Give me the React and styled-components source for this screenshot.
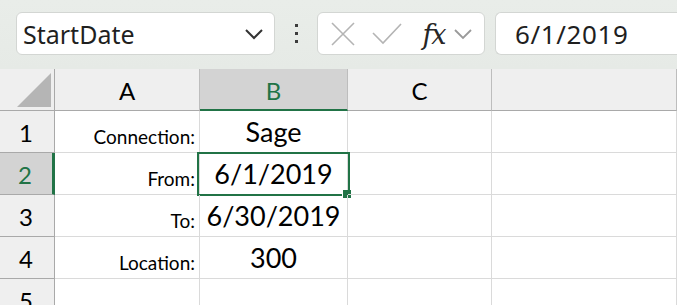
import React from 'react';
import styled, { createGlobalStyle } from 'styled-components';

const GlobalStyle = createGlobalStyle`
  html, body { margin: 0; padding: 0; background: #ffffff; overflow: hidden; }
  * { box-sizing: border-box; }
`;

const Page = styled.div`
  width: 677px;
  height: 305px;
  overflow: hidden;
  display: flex;
  flex-direction: column;
`;

const FormulaBar = styled.div`
  height: 69px;
  flex: none;
  display: flex;
  align-items: center;
  padding: 0 0 2px 16px;
  background: linear-gradient(#e9ede9, #e6eae6);
  font-family: "Noto Sans", "Open Sans", sans-serif;
`;

const Box = styled.div`
  height: 43px;
  background: #fff;
  border: 1px solid #d3d6d3;
  border-radius: 6px;
  display: flex;
  align-items: center;
`;

const NameBox = styled(Box)`
  width: 259px;
  padding: 0 10px 0 6px;
  justify-content: space-between;
  font-size: 25px;
  color: #1f1f1f;
`;

const Dots = styled.div`
  width: 42px;
  display: flex;
  flex-direction: column;
  align-items: center;
  gap: 5px;
  span {
    width: 3px;
    height: 3px;
    background: #3c3c3c;
  }
`;

const ButtonGroup = styled(Box)`
  width: 168px;
  padding: 0 4px 0 12px;
`;

const IconSlot = styled.div`
  width: ${p => p.$w}px;
  display: flex;
  align-items: center;
  justify-content: center;
`;

const Fx = styled.span`
  font-family: "DejaVu Serif", "Liberation Serif", serif;
  font-style: italic;
  font-size: 27px;
  line-height: 1;
  color: #262626;
  letter-spacing: -1px;
  padding-top: 2px;
`;

const Input = styled(Box)`
  flex: 1;
  margin-left: 10px;
  border-right: none;
  border-radius: 6px 0 0 6px;
  padding-left: 19px;
  font-size: 26px;
  letter-spacing: 0.6px;
  color: #1f1f1f;
`;

const Sheet = styled.div`
  flex: 1;
  display: grid;
  grid-template-columns: 55px 145px 148px 144px 1fr;
  grid-auto-rows: 42px;
  font-family: Lato, "Liberation Sans", sans-serif;
`;

const Cell = styled.div`
  border-right: 1px solid #dadada;
  border-bottom: 1px solid #dadada;
  display: flex;
  align-items: flex-end;
  justify-content: ${p => (p.$align === 'right' ? 'flex-end' : 'center')};
  padding: 0 4px 4px;
  font-size: ${p => p.$size || 25}px;
  color: #000;
  position: relative;
  white-space: nowrap;
`;

const Corner = styled.div`
  background: #efefef;
  border-right: 1px solid #a9a9a9;
  border-bottom: 1px solid #a9a9a9;
  position: relative;
  &::after {
    content: '';
    position: absolute;
    right: 3px;
    bottom: 3px;
    width: 34px;
    height: 34px;
    background: #b5b5b5;
    clip-path: polygon(100% 0, 100% 100%, 0 100%);
  }
`;

const ColHead = styled.div`
  background: ${p => (p.$active ? '#d3d3d3' : '#efefef')};
  border-right: 1px solid #bdbdbd;
  border-bottom: ${p => (p.$active ? '2px solid #217346' : '1px solid #a9a9a9')};
  display: flex;
  align-items: center;
  justify-content: center;
  padding-top: 2px;
  font-size: 24px;
  color: ${p => (p.$active ? '#217346' : '#000')};
`;

const RowHead = styled.div`
  background: ${p => (p.$active ? '#d3d3d3' : '#efefef')};
  border-right: ${p => (p.$active ? '3px solid #217346' : '1px solid #a9a9a9')};
  border-bottom: 1px solid #a9a9a9;
  display: flex;
  align-items: center;
  justify-content: center;
  padding: 2px 2px 0 0;
  font-size: 24px;
  color: ${p => (p.$active ? '#217346' : '#000')};
`;

const Selection = styled.div`
  position: absolute;
  top: -1px;
  left: -3px;
  right: -3px;
  bottom: -2px;
  border: 2px solid #217346;
  pointer-events: none;
  &::after {
    content: '';
    position: absolute;
    right: -3px;
    bottom: -4px;
    width: 8px;
    height: 8px;
    background: #217346;
    border-left: 1px solid #fff;
  }
`;

const Chevron = ({ size = 20, color = '#333', width = 1.8 }) => (
  <svg width={size} height={size * 0.6} viewBox="0 0 20 12" fill="none">
    <path d="M2 2 L10 10 L18 2" stroke={color} strokeWidth={width} />
  </svg>
);

const rows = [
  { n: 1, label: 'Connection:', value: 'Sage' },
  { n: 2, label: 'From:', value: '6/1/2019', active: true },
  { n: 3, label: 'To:', value: '6/30/2019' },
  { n: 4, label: 'Location:', value: '300' },
  { n: 5, label: '', value: '' },
];

export default function App() {
  return (
    <Page>
      <GlobalStyle />
      <FormulaBar>
        <NameBox>
          <span>StartDate</span>
          <Chevron size={20} color="#333" width={2} />
        </NameBox>
        <Dots>
          <span />
          <span />
          <span />
        </Dots>
        <ButtonGroup>
          <IconSlot $w={26}>
            <svg width="24" height="24" viewBox="0 0 24 24">
              <path d="M1 1 L23 23 M23 1 L1 23" stroke="#b4b4b4" strokeWidth="1.6" />
            </svg>
          </IconSlot>
          <IconSlot $w={62}>
            <svg width="30" height="22" viewBox="0 0 30 22">
              <path d="M1 10 L11 20 L29 1" stroke="#b4b4b4" strokeWidth="1.6" fill="none" />
            </svg>
          </IconSlot>
          <IconSlot $w={32}>
            <Fx>fx</Fx>
          </IconSlot>
          <IconSlot $w={26}>
            <Chevron size={20} color="#9a9a9a" width={1.8} />
          </IconSlot>
        </ButtonGroup>
        <Input>6/1/2019</Input>
      </FormulaBar>
      <Sheet>
        <Corner />
        <ColHead>A</ColHead>
        <ColHead $active>B</ColHead>
        <ColHead>C</ColHead>
        <ColHead />
        {rows.map(r => (
          <React.Fragment key={r.n}>
            <RowHead $active={r.active}>{r.n}</RowHead>
            <Cell $align="right" $size={19}>{r.label}</Cell>
            <Cell $size={27}>
              {r.value}
              {r.active && <Selection />}
            </Cell>
            <Cell />
            <Cell />
          </React.Fragment>
        ))}
      </Sheet>
    </Page>
  );
}
